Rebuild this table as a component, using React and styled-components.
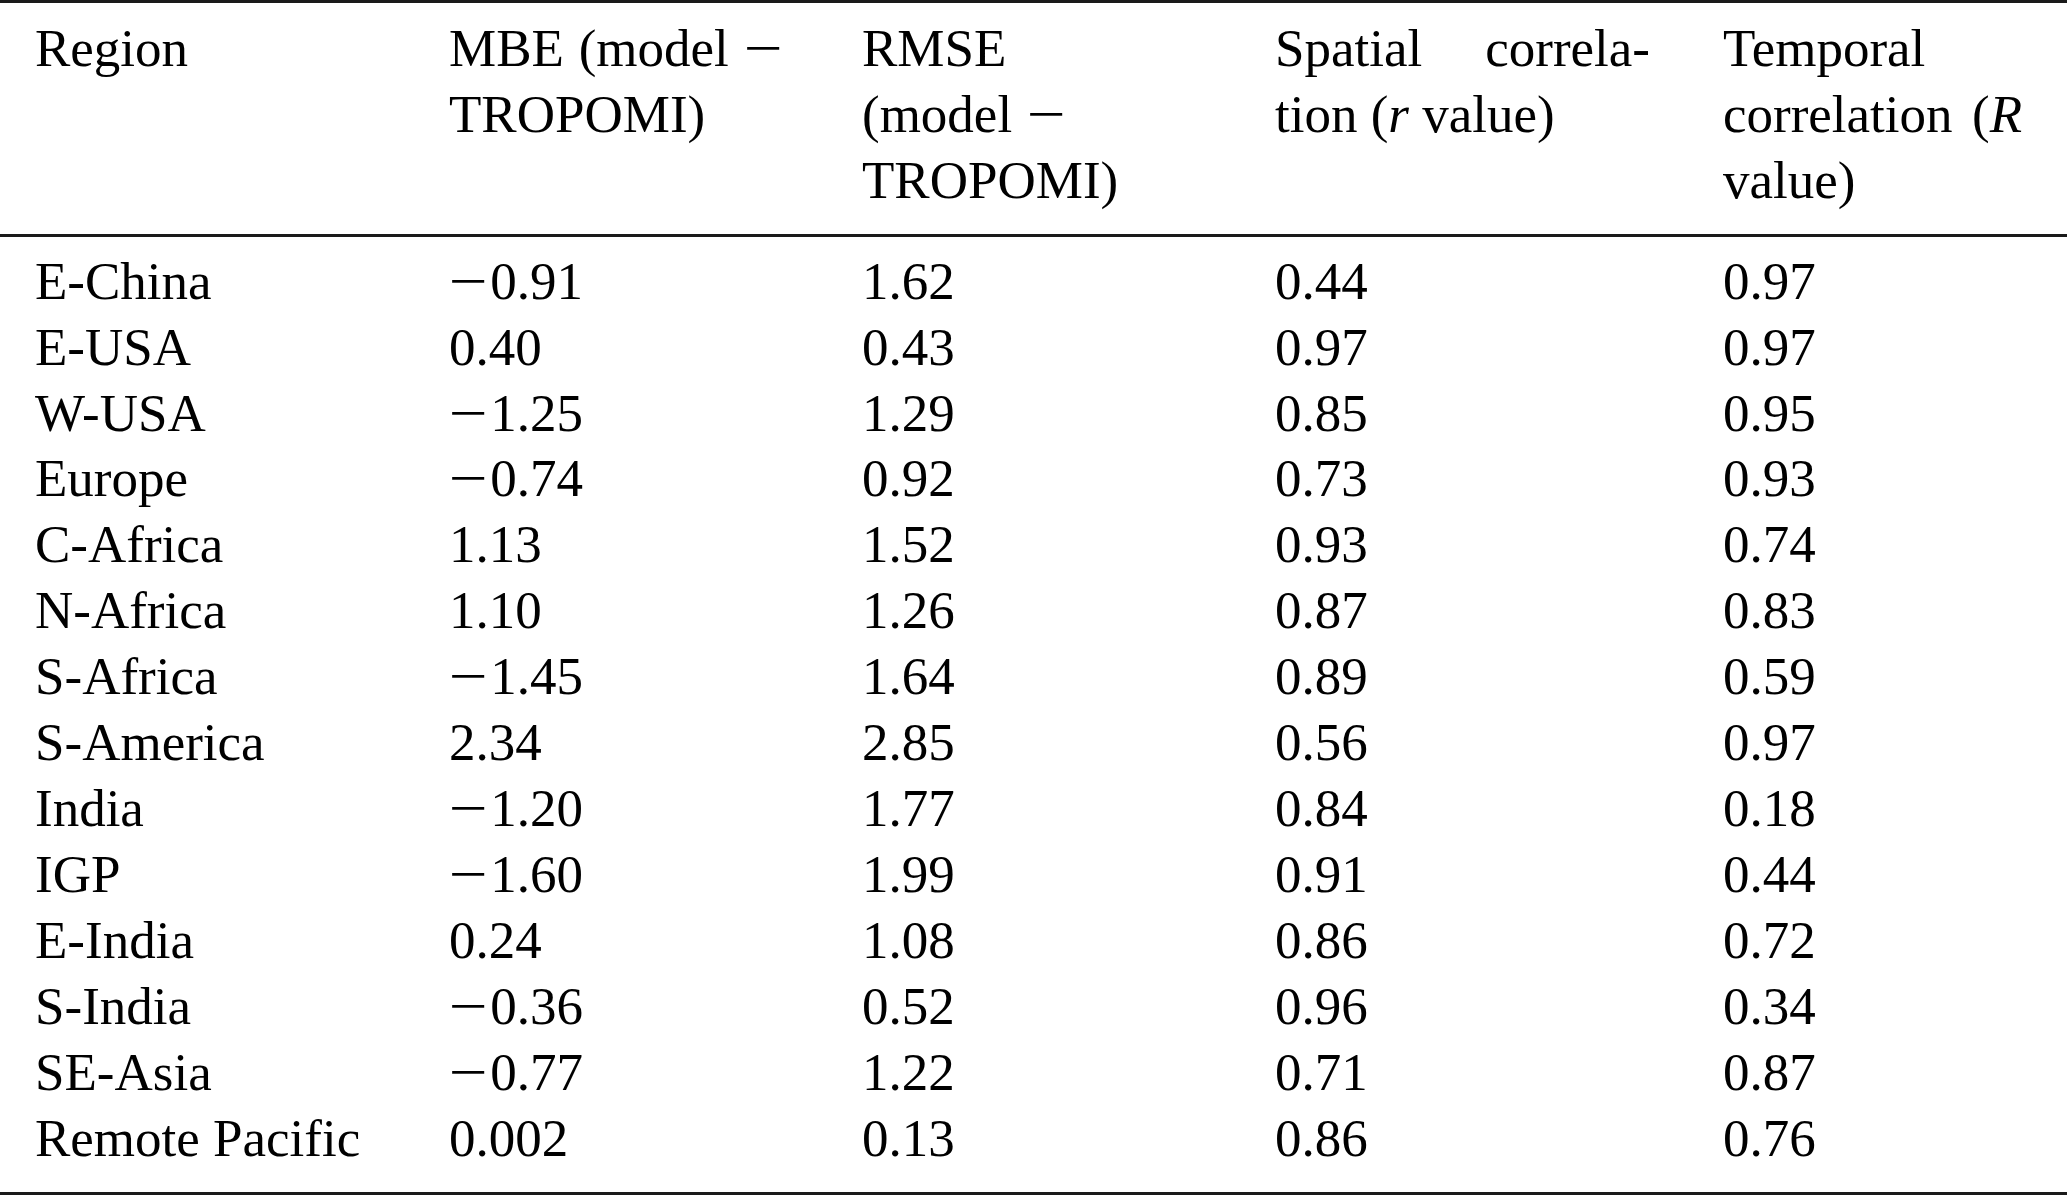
import React from "react";
import styled, { createGlobalStyle } from "styled-components";

const rows = [
  ["E-China", "-0.91", "1.62", "0.44", "0.97"],
  ["E-USA", "0.40", "0.43", "0.97", "0.97"],
  ["W-USA", "-1.25", "1.29", "0.85", "0.95"],
  ["Europe", "-0.74", "0.92", "0.73", "0.93"],
  ["C-Africa", "1.13", "1.52", "0.93", "0.74"],
  ["N-Africa", "1.10", "1.26", "0.87", "0.83"],
  ["S-Africa", "-1.45", "1.64", "0.89", "0.59"],
  ["S-America", "2.34", "2.85", "0.56", "0.97"],
  ["India", "-1.20", "1.77", "0.84", "0.18"],
  ["IGP", "-1.60", "1.99", "0.91", "0.44"],
  ["E-India", "0.24", "1.08", "0.86", "0.72"],
  ["S-India", "-0.36", "0.52", "0.96", "0.34"],
  ["SE-Asia", "-0.77", "1.22", "0.71", "0.87"],
  ["Remote Pacific", "0.002", "0.13", "0.86", "0.76"],
];

// math minus is wider than the font's own glyph
const Minus = () => <MinusSign>{"\u2212"}</MinusSign>;

const Value = ({ text }) =>
  text.startsWith("-") ? (
    <>
      <Minus />
      {text.slice(1)}
    </>
  ) : (
    text
  );

const App = () => {
  return (
    <>
      <GlobalStyle />
      <Table>
        <Head>
          <HeadCell>Region</HeadCell>
          <HeadCell $w={336}>
            MBE (model <Minus /> TROPOMI)
          </HeadCell>
          <HeadCell $w={206}>
            RMSE (model <Minus /> TROPOMI)
          </HeadCell>
          <HeadCell $w={375}>
            Spatial correla{"\u00AD"}tion (<i>r</i> value)
          </HeadCell>
          <HeadCell $w={299}>
            Temporal correlation (<i>R</i> value)
          </HeadCell>
        </Head>
        <Body>
          {rows.map((row) => (
            <Row key={row[0]}>
              {row.map((cell, i) => (
                <Cell key={i}>
                  <Value text={cell} />
                </Cell>
              ))}
            </Row>
          ))}
        </Body>
      </Table>
    </>
  );
};

const GlobalStyle = createGlobalStyle`
  html, body {
    margin: 0;
    padding: 0;
    background: #fff;
  }
  body {
    font-family: "Liberation Serif", "Times New Roman", serif;
    color: #000;
  }
`;

const Table = styled.div`
  width: 2067px;
  font-size: 53px;
  line-height: 65.9px;
  border-top: 3px solid #1a1a1a;
  border-bottom: 3px solid #1a1a1a;
`;

const Head = styled.div`
  display: grid;
  grid-template-columns: 414px 413px 413px 448px 1fr;
  padding: 13px 0 20px 35px;
  border-bottom: 3px solid #1a1a1a;
`;

const HeadCell = styled.div`
  width: ${(p) => (p.$w ? `${p.$w}px` : "auto")};
  text-align: justify;
  hyphens: manual;

  i {
    font-style: italic;
  }
`;

const Body = styled.div`
  padding: 12px 0 21px 35px;
`;

const Row = styled.div`
  display: grid;
  grid-template-columns: 414px 413px 413px 448px 1fr;
`;

const Cell = styled.div`
  white-space: nowrap;
`;

const MinusSign = styled.span`
  display: inline-block;
  width: 0.78em;
  transform: scaleX(1.3);
  transform-origin: left center;
`;

export default App;
